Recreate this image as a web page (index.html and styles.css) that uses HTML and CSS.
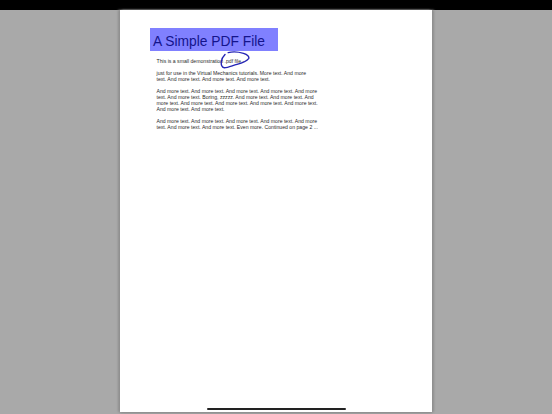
FILE: index.html
```html
<!DOCTYPE html>
<html lang="en">
<head>
<meta charset="utf-8">
<title>A Simple PDF File</title>
<link rel="stylesheet" href="styles.css">
</head>
<body>
<header class="topbar"></header>
<main class="stage">
  <article class="page">
    <h1 class="title">A Simple PDF File</h1>
    <div class="body">
      <p>This is a small demonstration .pdf file -</p>
      <p>just for use in the Virtual Mechanics tutorials. More text. And more<br>text. And more text. And more text. And more text.</p>
      <p>And more text. And more text. And more text. And more text. And more<br>text. And more text. Boring, zzzzz. And more text. And more text. And<br>more text. And more text. And more text. And more text. And more text.<br>And more text. And more text.</p>
      <p>And more text. And more text. And more text. And more text. And more<br>text. And more text. And more text. Even more. Continued on page 2 ...</p>
    </div>
    <svg class="ink" viewBox="0 0 30 18" aria-hidden="true">
      <path d="M5 3.6C3.4 5.2 1.6 8 1.3 10.8C1 13.8 1.8 16.6 4.2 16.8C7.2 17 12 14.8 17 13.4C21.5 12.2 26.8 10 28.6 7.6C29.6 5.8 27.4 3.6 23.5 2.4C19 1 13 0.4 8.2 1.6" />
    </svg>
  </article>
  <div class="home"></div>
</main>
</body>
</html>
```
FILE: styles.css
```css
* { box-sizing: border-box; }
html, body { margin: 0; height: 414px; overflow: hidden; }
body { background: #a9a9a9; font-family: "Liberation Sans", Arial, sans-serif; }
.topbar { height: 10px; background: #000; }
.stage { position: relative; height: 404px; display: flex; justify-content: center; }
.page {
  position: relative;
  width: 312px;
  height: 402px;
  background: #fff;
  padding: 18px 0 0 30px;
  box-shadow: -2px 0 2px #8f8f8f, 2px 0 2px #8f8f8f, 0 1px 2px #8f8f8f;
}
.title {
  width: 128px;
  height: 23px;
  margin: 0;
  padding-left: 3px;
  background: #8080ff;
  color: #14148c;
  font-size: 13.8px;
  font-weight: 400;
  line-height: 27px;
  white-space: nowrap;
}
.body {
  margin: 7px 0 0 6.5px;
  color: #2a2a2a;
  font-size: 5.15px;
  line-height: 6px;
  white-space: nowrap;
}
.body p { margin: 0 0 6px; }
.ink {
  position: absolute;
  left: 100px;
  top: 41px;
  width: 30px;
  height: 18px;
}
.ink path { fill: none; stroke: #2424b4; stroke-width: 1.4; stroke-linecap: round; stroke-linejoin: round; }
.home {
  position: absolute;
  left: 207px;
  top: 398px;
  width: 139px;
  height: 2px;
  border-radius: 1px;
  background: #222;
}
```
